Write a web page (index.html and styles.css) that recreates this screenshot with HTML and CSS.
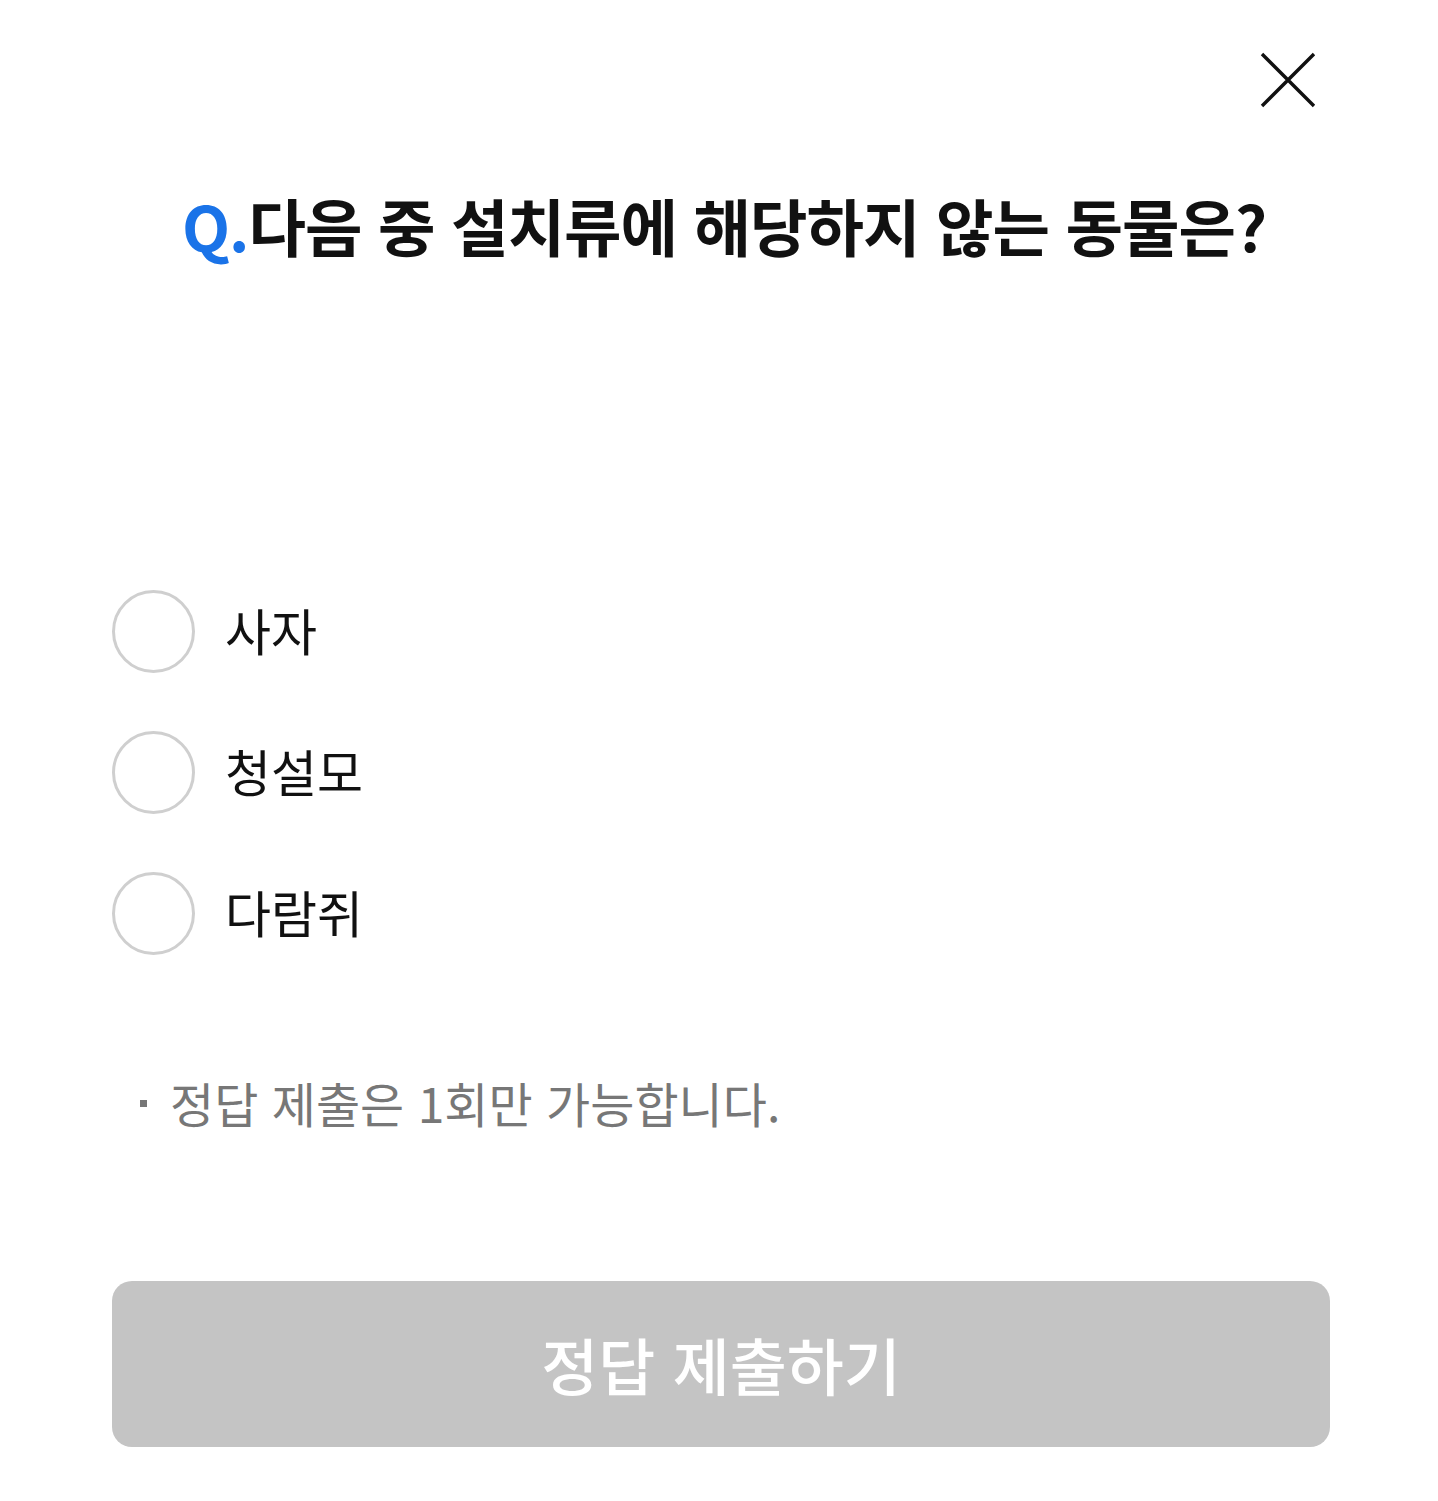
FILE: index.html
```html
<!DOCTYPE html>
<html lang="ko">
<head>
<meta charset="utf-8">
<link rel="stylesheet" href="styles.css">
</head>
<body>
<div class="modal">
  <div class="top">
    <button class="close" aria-label="닫기">
      <svg width="60" height="60" viewBox="0 0 60 60"><path d="M4 4 L56 56 M56 4 L4 56" stroke="#111" stroke-width="3.4" fill="none"/></svg>
    </button>
  </div>
  <h1 class="title"><span class="q">Q.</span>다음 중 설치류에 해당하지 않는 동물은?</h1>
  <ul class="options">
    <li class="option"><span class="radio"></span><span class="label">사자</span></li>
    <li class="option"><span class="radio"></span><span class="label">청설모</span></li>
    <li class="option"><span class="radio"></span><span class="label">다람쥐</span></li>
  </ul>
  <p class="notice"><span class="dot"></span>정답 제출은 1회만 가능합니다.</p>
  <button class="submit">정답 제출하기</button>
</div>
</body>
</html>
```

FILE: styles.css
```css
* { box-sizing: border-box; }
html, body { margin: 0; padding: 0; background: #fff; }
body { font-family: "Noto Sans CJK KR", "Noto Sans", sans-serif; color: #111; }
.modal { width: 1438px; height: 1501px; padding: 0 108px 0 112px; display: flex; flex-direction: column; }
.top { display: flex; justify-content: flex-end; padding-top: 50px; height: 180px; }
.close { border: 0; background: none; padding: 0; width: 60px; height: 60px; margin-right: 12px; }
.close svg { display: block; }
.title { margin: 0; text-align: center; font-size: 62.5px; font-weight: 700; line-height: 90px; letter-spacing: -1px; color: #111; padding-left: 6px; }
.q { color: #1a73e8; }
.options { list-style: none; margin: 320px 0 0; padding: 0; display: flex; flex-direction: column; gap: 58px; }
.option { display: flex; align-items: center; height: 83px; gap: 30px; }
.radio { width: 83px; height: 83px; border: 3px solid #cfcfcf; border-radius: 50%; flex: none; }
.label { font-size: 50px; line-height: 1; color: #111; margin-top: -6px; }
.notice { margin: 114px 0 0 28px; font-size: 48px; color: #777; line-height: 66px; display: flex; align-items: center; }
.dot { width: 7px; height: 7px; background: #777; margin-right: 23px; margin-top: 2px; flex: none; }
.submit { margin-top: 146px; height: 166px; border: 0; border-radius: 20px; background: #c4c4c4; color: #fff; font-family: inherit; font-size: 62px; font-weight: 500; width: 1218px; }
```
